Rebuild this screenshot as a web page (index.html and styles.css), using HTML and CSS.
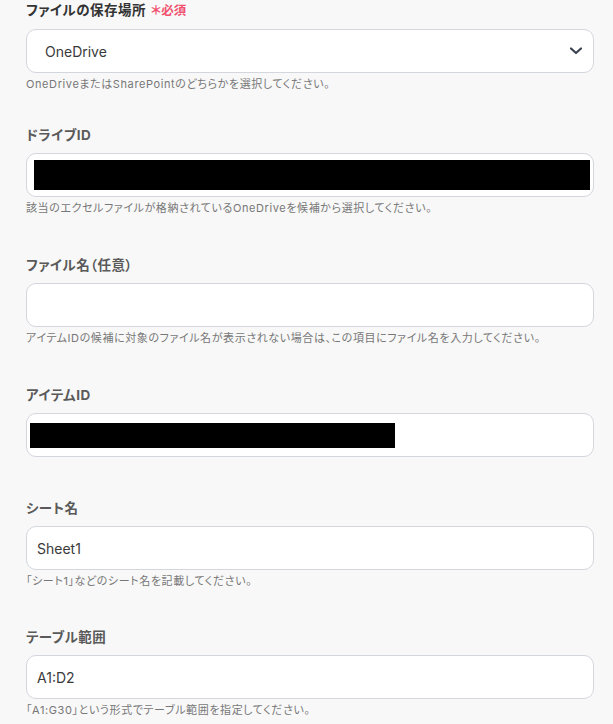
FILE: index.html
```html
<!DOCTYPE html>
<html lang="ja">
<head>
<meta charset="utf-8">
<link rel="stylesheet" href="styles.css">
</head>
<body>
<div class="form">
  <div class="field field-first">
    <div class="label label-dark">ファイルの保存場所<span class="req">＊必須</span></div>
    <div class="box select">
      <span class="value">OneDrive</span>
      <svg class="chev" width="14" height="10" viewBox="0 0 14 10"><path d="M2 2.5 L7 7 L12 2.5" fill="none" stroke="#3b4150" stroke-width="2.2" stroke-linecap="round" stroke-linejoin="round"/></svg>
    </div>
    <div class="help">OneDriveまたはSharePointのどちらかを選択してください。</div>
  </div>

  <div class="field">
    <div class="label">ドライブID</div>
    <div class="box redact-box">
      <div class="redact redact-wide"></div>
    </div>
    <div class="help">該当のエクセルファイルが格納されているOneDriveを候補から選択してください。</div>
  </div>

  <div class="field">
    <div class="label">ファイル名（任意）</div>
    <div class="box"></div>
    <div class="help">アイテムIDの候補に対象のファイル名が表示されない場合は、この項目にファイル名を入力してください。</div>
  </div>

  <div class="field field-nohelp">
    <div class="label">アイテムID</div>
    <div class="box redact-box2">
      <div class="redact redact-mid"></div>
    </div>
  </div>

  <div class="field field-tight">
    <div class="label">シート名</div>
    <div class="box input"><span class="value">Sheet1</span></div>
    <div class="help">「シート1」などのシート名を記載してください。</div>
  </div>

  <div class="field">
    <div class="label">テーブル範囲</div>
    <div class="box input"><span class="value">A1:D2</span></div>
    <div class="help">「A1:G30」という形式でテーブル範囲を指定してください。</div>
  </div>
</div>
</body>
</html>
```

FILE: styles.css
```css
html, body {
  margin: 0;
  padding: 0;
  background: #f8f8f8;
}
body {
  font-family: "Inter", "Noto Sans CJK JP", sans-serif;
  color: #333;
}
.form {
  padding: 0 19px 0 26px;
}
.field {
  display: flex;
  flex-direction: column;
  margin-bottom: 38px;
}
.field-first {
  margin-bottom: 32px;
}
.field-nohelp {
  margin-bottom: 41px;
}
.field-tight {
  margin-bottom: 37px;
}
.label {
  font-size: 13.5px;
  font-weight: 700;
  line-height: 20px;
  color: #5a5a5a;
  margin-bottom: 8px;
  font-feature-settings: "palt";
  letter-spacing: 0.5px;
}
.label-dark {
  color: #333;
}
.req {
  color: #f0506e;
  font-size: 12.5px;
  margin-left: 5px;
  letter-spacing: 0;
}
.box {
  height: 42px;
  border: 1px solid #d3d6dd;
  border-radius: 10px;
  background: #fff;
  display: flex;
  align-items: center;
  box-sizing: content-box;
}
.select {
  padding: 0 10px 0 18px;
  justify-content: space-between;
}
.input {
  padding: 0 10px;
}
.value {
  font-size: 14px;
  color: #3a3a3a;
}
.help {
  font-size: 11px;
  line-height: 17px;
  color: #777;
  margin-top: 3px;
  font-feature-settings: "palt";
  letter-spacing: 0.6px;
}
.redact-box {
  padding-left: 7px;
}
.redact-box2 {
  padding-left: 3px;
}
.redact {
  background: #000;
}
.redact-wide {
  width: 556px;
  height: 30px;
}
.redact-mid {
  width: 365px;
  height: 25px;
}
```
